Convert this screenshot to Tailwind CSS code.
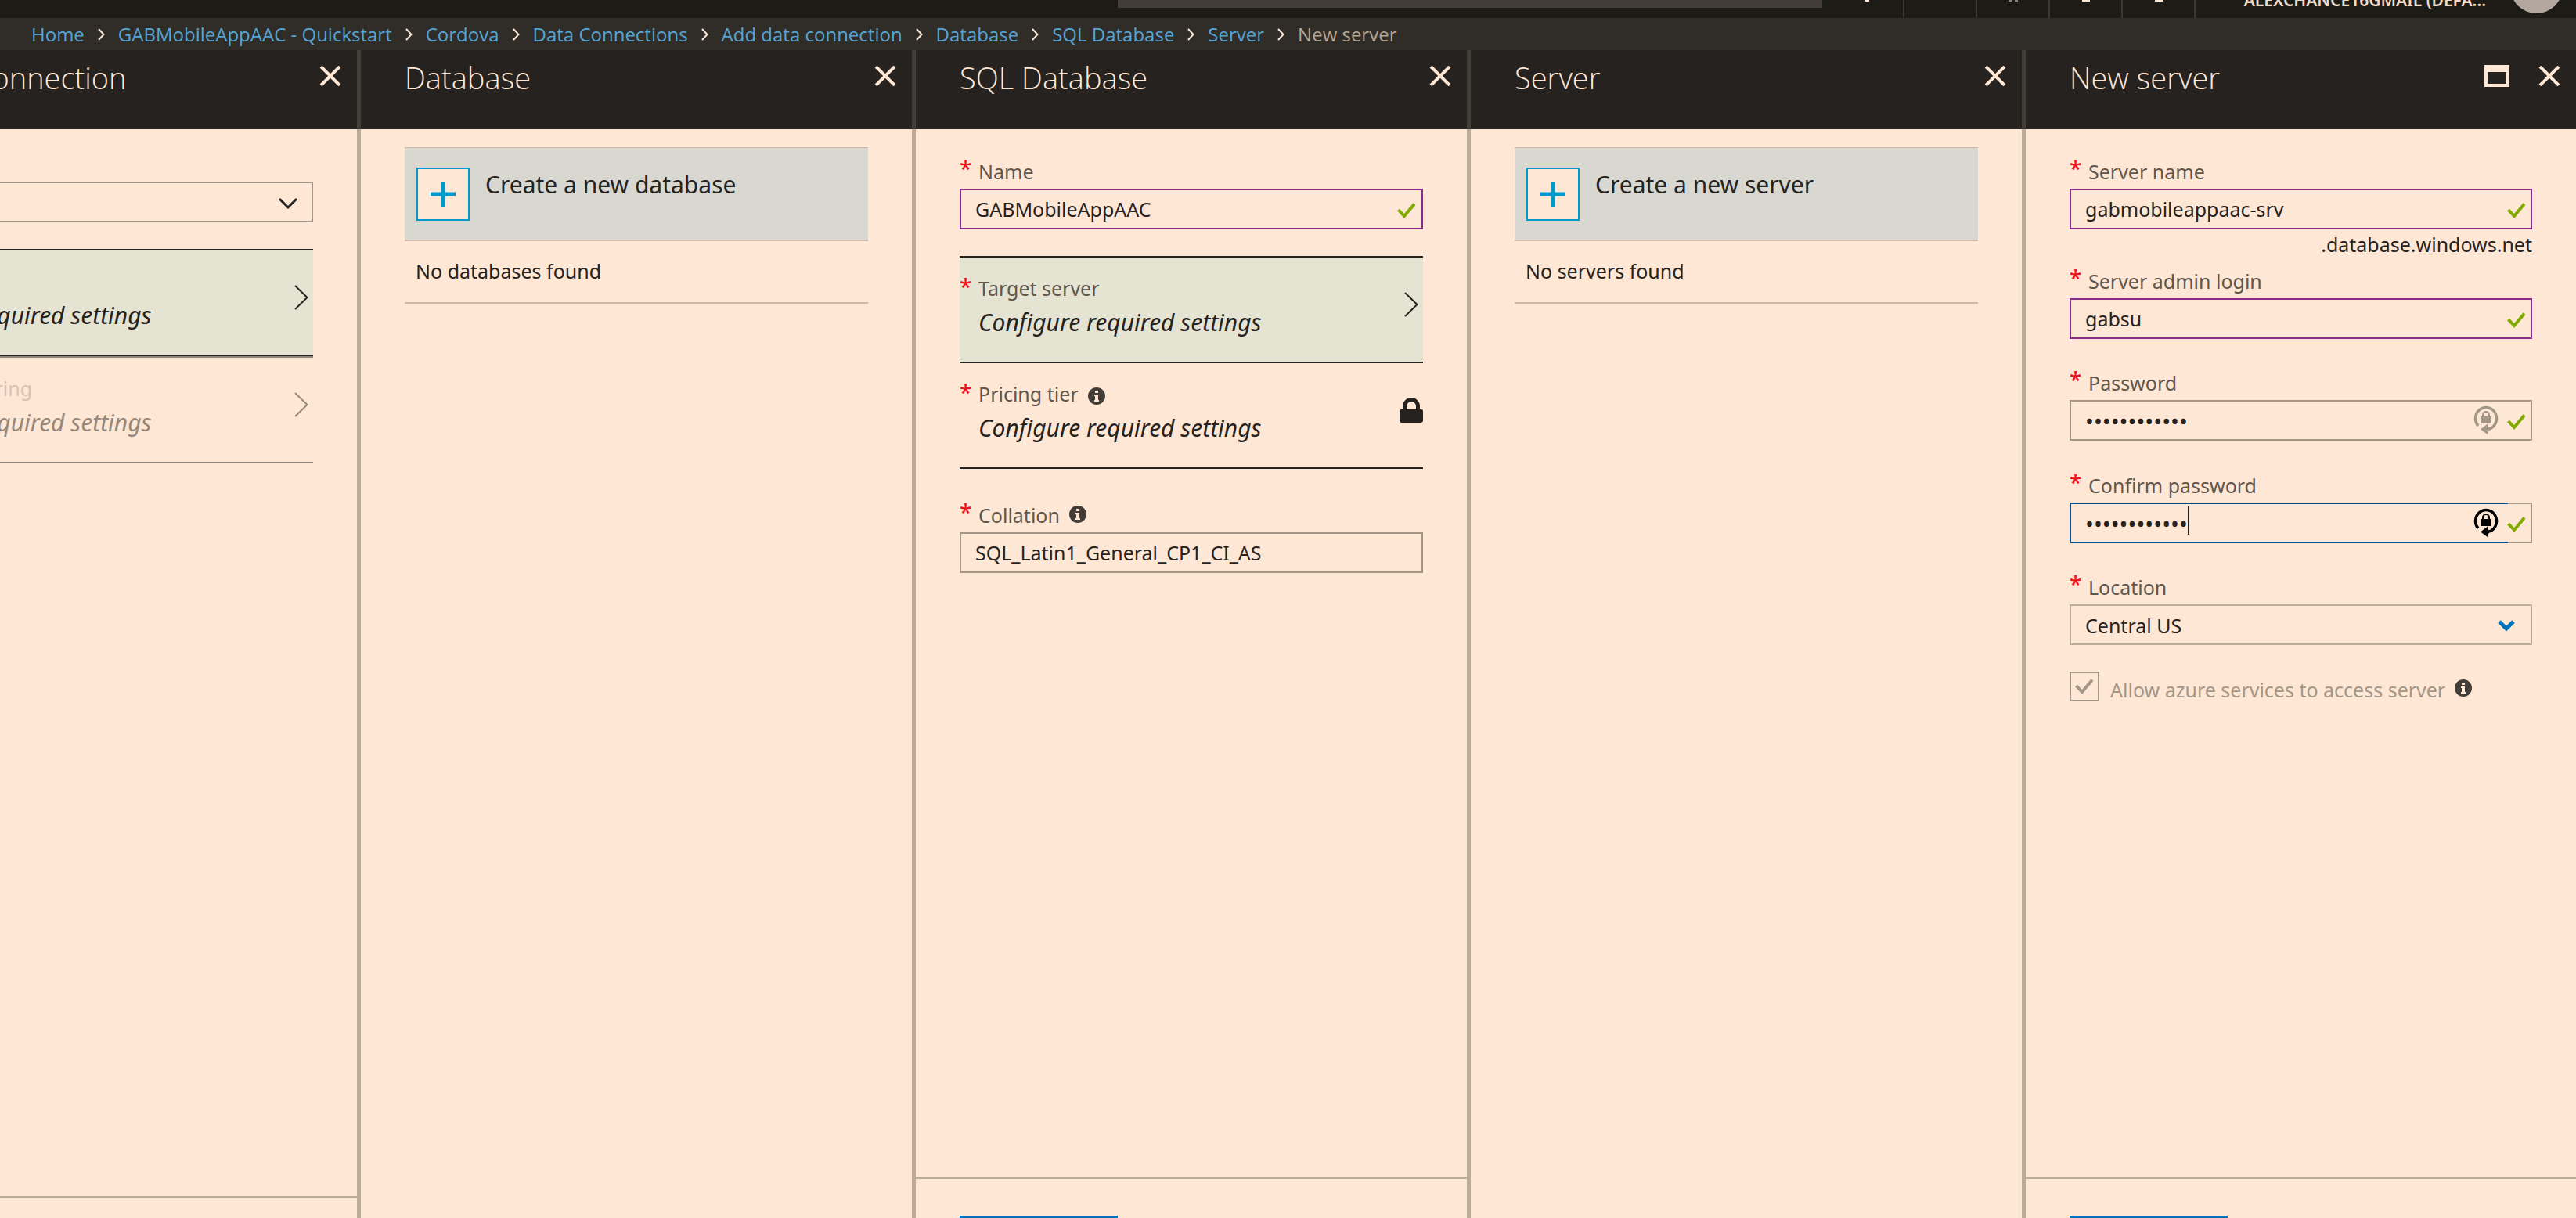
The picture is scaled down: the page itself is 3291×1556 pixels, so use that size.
<!DOCTYPE html>
<html lang="en">
<head>
<meta charset="utf-8">
<title>New server - Microsoft Azure</title>
<script src="https://cdn.jsdelivr.net/npm/@tailwindcss/browser@4"></script>
</head>
<body class="flex h-screen flex-col overflow-hidden bg-[#ffe7d5] font-['Noto_Sans','Open_Sans',sans-serif] text-[25px] text-[#262220]">

<svg class="hidden" aria-hidden="true">
  <symbol id="crumb" viewBox="0 0 9 16"><path d="M1 1l6.500 7L1 15" fill="none" stroke="currentColor" stroke-width="2"/></symbol>
  <symbol id="close" viewBox="0 0 28 26"><path d="M2 1l24 24M26 1L2 25" fill="none" stroke="currentColor" stroke-width="4"/></symbol>
  <symbol id="maximize" viewBox="0 0 32 28"><path d="M0 0h32v28H0zM4 9v15h24V9z" fill="currentColor" fill-rule="evenodd"/></symbol>
  <symbol id="chevron" viewBox="0 0 18 32"><path d="M1 1l15.500 15L1 31" fill="none" stroke="currentColor" stroke-width="2"/></symbol>
  <symbol id="tick" viewBox="0 0 24 20"><path d="M1.500 9l7.500 8L22 1.500" fill="none" stroke="currentColor" stroke-width="4"/></symbol>
  <symbol id="info" viewBox="0 0 22 22"><circle cx="11" cy="11" r="11" fill="currentColor"/><path d="M9 4h4v3H9zM8 9h5v7h1v2H8v-2h1v-5H8z" fill="#ffe7d5"/></symbol>
  <symbol id="lock" viewBox="0 0 30 32"><path d="M2 15h2v-4a11 11 0 0 1 22 0v4h2q2 0 2 2v12q0 3-3 3H3q-3 0-3-3V17q0-2 2-2zm7 0h12v-4a6 6 0 0 0-12 0z" fill="currentColor" fill-rule="evenodd"/></symbol>
  <symbol id="reset" viewBox="0 0 32 38"><path d="M6 26A13.500 14 0 1 1 18 30.500" fill="none" stroke="currentColor" stroke-width="3.500"/><path d="M9 30.500l9-7v4.500l2 2.500-2 6.500z" fill="currentColor"/><path d="M10 14h1v-2a5 5 0 0 1 10 0v2h1v9H10zm3 0h6v-2a3 3 0 0 0-6 0z" fill="currentColor" fill-rule="evenodd"/></symbol>
  <symbol id="plus" viewBox="0 0 32 32"><path d="M16 0v32M0 16h32" fill="none" stroke="currentColor" stroke-width="5"/></symbol>
</svg>

<header class="flex h-[23px] shrink-0 items-end justify-end overflow-hidden bg-[#1c1b16]">
  <div class="mb-[13px] h-9 w-[900px] shrink-0 bg-[#423e37]"></div>
  <div class="ml-3 flex h-[92px] shrink-0 text-[#ffe7d5]">
    <span class="flex w-[93px] justify-center border-r-2 border-[#3a3833] pt-[69px]"><i class="h-[2px] w-[5px] bg-current"></i></span>
    <span class="w-[93px] border-r-2 border-[#3a3833]"></span>
    <span class="flex w-[93px] justify-center gap-1 border-r-2 border-[#3a3833] pt-[69px] text-[#8c8278]"><i class="h-[2px] w-1 bg-current"></i><i class="h-[2px] w-1 bg-current"></i></span>
    <span class="flex w-[93px] justify-center border-r-2 border-[#3a3833] pt-[69px]"><i class="h-[2px] w-[10px] bg-current"></i></span>
    <span class="flex w-[93px] justify-center border-r-2 border-[#3a3833] pt-[69px]"><i class="h-[2px] w-[10px] bg-current"></i></span>
  </div>
  <span class="mb-[11px] w-[371px] shrink-0 text-right text-[21px] leading-6 font-semibold text-[#f0dac8]">ALEXCHANCE16GMAIL (DEFA...</span>
  <span class="mr-[17px] mb-[6px] ml-[31px] size-[67px] shrink-0 rounded-full bg-[#b3a89f]"></span>
</header>

<nav aria-label="Breadcrumb" class="flex h-[41px] shrink-0 items-center bg-[#302d28] pl-10 font-['Open_Sans',sans-serif] text-2xl whitespace-nowrap text-[#57a4d4]">
  <a href="#">Home</a><svg class="mx-[17px] h-4 w-[9px] text-[#ffe7d5]"><use href="#crumb"/></svg>
  <a href="#">GABMobileAppAAC - Quickstart</a><svg class="mx-[17px] h-4 w-[9px] text-[#ffe7d5]"><use href="#crumb"/></svg>
  <a href="#">Cordova</a><svg class="mx-[17px] h-4 w-[9px] text-[#ffe7d5]"><use href="#crumb"/></svg>
  <a href="#">Data Connections</a><svg class="mx-[17px] h-4 w-[9px] text-[#ffe7d5]"><use href="#crumb"/></svg>
  <a href="#">Add data connection</a><svg class="mx-[17px] h-4 w-[9px] text-[#ffe7d5]"><use href="#crumb"/></svg>
  <a href="#">Database</a><svg class="mx-[17px] h-4 w-[9px] text-[#ffe7d5]"><use href="#crumb"/></svg>
  <a href="#">SQL Database</a><svg class="mx-[17px] h-4 w-[9px] text-[#ffe7d5]"><use href="#crumb"/></svg>
  <a href="#">Server</a><svg class="mx-[17px] h-4 w-[9px] text-[#ffe7d5]"><use href="#crumb"/></svg>
  <span class="text-[#b5a595]">New server</span>
</nav>

<main class="grid min-h-0 flex-1 grid-cols-[461fr_709fr_709fr_709fr_703fr]">

  <!-- Add data connection -->
  <section class="flex min-w-0 justify-end overflow-hidden">
    <div class="flex w-[709px] shrink-0 flex-col">
      <div class="flex h-[101px] shrink-0 items-start justify-between border-r-[5px] border-[#423f37] bg-[#262220] pr-5 pl-14 text-[#ffe7d5]">
        <h2 class="font-['Open_Sans',sans-serif] text-[38px] leading-[70px] font-light">Add data connection</h2>
        <button aria-label="Close" class="mt-5"><svg class="h-[26px] w-7"><use href="#close"/></svg></button>
      </div>
      <div class="flex min-h-0 flex-1 flex-col border-r-[5px] border-[#bbab99]">
        <div class="flex-1 px-14 pt-[67px]">
          <div class="relative">
            <select aria-label="Type" class="h-[52px] w-full appearance-none border-2 border-[#a49787] pl-[18px]"><option>SQL Database</option></select>
            <svg viewBox="0 0 24 16" class="pointer-events-none absolute top-5 right-5 h-4 w-6"><path d="M1 2l11 11L23 2" fill="none" stroke="currentColor" stroke-width="3"/></svg>
          </div>
          <button class="mt-[34px] flex h-[137px] w-full items-start justify-between border-y-2 border-[#262220] bg-[#e5e4d3] text-left">
            <span class="pt-[23px] pl-6"><span class="block leading-8 text-[#5f564c]">SQL Database</span><span class="block text-[30px] leading-14 italic">Configure required settings</span></span>
            <svg class="mt-11 mr-[6px] h-8 w-[18px]"><use href="#chevron"/></svg>
          </button>
          <button disabled class="flex h-[137px] w-full items-start justify-between border-y-2 border-[#8f857a] text-left text-[#96897c]">
            <span class="pt-[23px] pl-6"><span class="block leading-8 text-[#d6c3b2]">Connection string</span><span class="block text-[30px] leading-14 italic">Configure required settings</span></span>
            <svg class="mt-11 mr-[6px] h-8 w-[18px]"><use href="#chevron"/></svg>
          </button>
        </div>
        <div class="h-7 border-t-2 border-[#bbab99]"></div>
      </div>
    </div>
  </section>

  <!-- Database -->
  <section class="flex min-w-0 flex-col">
    <div class="flex h-[101px] shrink-0 items-start justify-between border-r-[5px] border-[#423f37] bg-[#262220] pr-5 pl-14 text-[#ffe7d5]">
      <h2 class="font-['Open_Sans',sans-serif] text-[38px] leading-[70px] font-light">Database</h2>
      <button aria-label="Close" class="mt-5"><svg class="h-[26px] w-7"><use href="#close"/></svg></button>
    </div>
    <div class="flex-1 border-r-[5px] border-[#bbab99] px-14 pt-[23px]">
      <button class="flex h-[120px] w-full items-start border-t border-b-2 border-[#cbb9a9] bg-[#d8d8d1] px-[15px] pt-[25px] text-left">
        <span class="grid size-[68px] place-items-center border-2 border-[#0099cc] bg-[#ffe7d5] text-[#0099cc]"><svg class="size-8"><use href="#plus"/></svg></span>
        <span class="pl-5 text-[30px] leading-11">Create a new database</span>
      </button>
      <p class="flex h-20 items-center border-b-2 border-[#cbb9a9] pl-[14px]">No databases found</p>
    </div>
  </section>

  <!-- SQL Database -->
  <section class="flex min-w-0 flex-col">
    <div class="flex h-[101px] shrink-0 items-start justify-between border-r-[5px] border-[#423f37] bg-[#262220] pr-5 pl-14 text-[#ffe7d5]">
      <h2 class="font-['Open_Sans',sans-serif] text-[38px] leading-[70px] font-light">SQL Database</h2>
      <button aria-label="Close" class="mt-5"><svg class="h-[26px] w-7"><use href="#close"/></svg></button>
    </div>
    <div class="flex min-h-0 flex-1 flex-col border-r-[5px] border-[#bbab99]">
      <form class="flex-1 px-14 pt-9">
        <label for="db-name" class="flex h-10 items-start leading-9 text-[#5f564c]"><span class="w-6 text-[28px] leading-7 font-medium text-[#f0101c]">*</span>Name</label>
        <div class="relative">
          <input id="db-name" value="GABMobileAppAAC" class="h-[52px] w-full border-2 border-[#8b2a8d] pl-[18px]">
          <svg class="absolute top-[18px] right-[9px] h-5 w-6 text-[#80aa00]"><use href="#tick"/></svg>
        </div>
        <button type="button" class="mt-[34px] flex h-[137px] w-full items-start justify-between border-y-2 border-[#262220] bg-[#e5e4d3] text-left">
          <span class="pt-[23px]">
            <span class="flex items-start leading-8 text-[#5f564c]"><span class="w-6 text-[28px] leading-7 font-medium text-[#f0101c]">*</span>Target server</span>
            <span class="block pl-6 text-[30px] leading-14 italic">Configure required settings</span>
          </span>
          <svg class="mt-11 mr-[6px] h-8 w-[18px]"><use href="#chevron"/></svg>
        </button>
        <button type="button" class="flex h-[135px] w-full items-start justify-between border-b-2 border-[#262220] text-left">
          <span class="pt-[23px]">
            <span class="flex items-start leading-8 text-[#5f564c]"><span class="w-6 text-[28px] leading-7 font-medium text-[#f0101c]">*</span>Pricing tier<svg class="mt-2 ml-3 size-[22px] text-[#423e37]"><use href="#info"/></svg></span>
            <span class="block pl-6 text-[30px] leading-14 italic">Configure required settings</span>
          </span>
          <svg class="mt-11 h-8 w-[30px]"><use href="#lock"/></svg>
        </button>
        <label for="collation" class="mt-[41px] flex h-10 items-start leading-9 text-[#5f564c]"><span class="w-6 text-[28px] leading-7 font-medium text-[#f0101c]">*</span>Collation<svg class="mt-[6px] ml-3 size-[22px] text-[#423e37]"><use href="#info"/></svg></label>
        <input id="collation" value="SQL_Latin1_General_CP1_CI_AS" class="h-[52px] w-full border-2 border-[#a49787] pl-[18px]">
      </form>
      <div class="h-[52px] overflow-hidden border-t-2 border-[#bbab99] px-14 pt-[47px]"><button aria-label="Select" class="block h-14 w-[202px] bg-[#0072bb]"></button></div>
    </div>
  </section>

  <!-- Server -->
  <section class="flex min-w-0 flex-col">
    <div class="flex h-[101px] shrink-0 items-start justify-between border-r-[5px] border-[#423f37] bg-[#262220] pr-5 pl-14 text-[#ffe7d5]">
      <h2 class="font-['Open_Sans',sans-serif] text-[38px] leading-[70px] font-light">Server</h2>
      <button aria-label="Close" class="mt-5"><svg class="h-[26px] w-7"><use href="#close"/></svg></button>
    </div>
    <div class="flex-1 border-r-[5px] border-[#bbab99] px-14 pt-[23px]">
      <button class="flex h-[120px] w-full items-start border-t border-b-2 border-[#cbb9a9] bg-[#d8d8d1] px-[15px] pt-[25px] text-left">
        <span class="grid size-[68px] place-items-center border-2 border-[#0099cc] bg-[#ffe7d5] text-[#0099cc]"><svg class="size-8"><use href="#plus"/></svg></span>
        <span class="pl-5 text-[30px] leading-11">Create a new server</span>
      </button>
      <p class="flex h-20 items-center border-b-2 border-[#cbb9a9] pl-[14px]">No servers found</p>
    </div>
  </section>

  <!-- New server -->
  <section class="flex min-w-0 flex-col">
    <div class="flex h-[101px] shrink-0 items-start bg-[#262220] pr-5 pl-14 text-[#ffe7d5]">
      <h2 class="flex-1 font-['Open_Sans',sans-serif] text-[38px] leading-[70px] font-light">New server</h2>
      <button aria-label="Maximize" class="mt-[19px] mr-[37px]"><svg class="h-7 w-8"><use href="#maximize"/></svg></button>
      <button aria-label="Close" class="mt-5"><svg class="h-[26px] w-7"><use href="#close"/></svg></button>
    </div>
    <form class="flex-1 px-14 pt-9">
      <label for="srv-name" class="flex h-10 items-start leading-9 text-[#5f564c]"><span class="w-6 text-[28px] leading-7 font-medium text-[#f0101c]">*</span>Server name</label>
      <div class="relative">
        <input id="srv-name" value="gabmobileappaac-srv" class="h-[52px] w-full border-2 border-[#8b2a8d] pl-[18px]">
        <svg class="absolute top-[18px] right-2 h-5 w-6 text-[#80aa00]"><use href="#tick"/></svg>
      </div>
      <p class="h-12 text-right leading-[38px]">.database.windows.net</p>

      <label for="login" class="flex h-10 items-start leading-9 text-[#5f564c]"><span class="w-6 text-[28px] leading-7 font-medium text-[#f0101c]">*</span>Server admin login</label>
      <div class="relative">
        <input id="login" value="gabsu" class="h-[52px] w-full border-2 border-[#8b2a8d] pl-[18px]">
        <svg class="absolute top-[18px] right-2 h-5 w-6 text-[#80aa00]"><use href="#tick"/></svg>
      </div>

      <label for="pw" class="mt-[38px] flex h-10 items-start leading-9 text-[#5f564c]"><span class="w-6 text-[28px] leading-7 font-medium text-[#f0101c]">*</span>Password</label>
      <div class="relative">
        <input id="pw" type="password" value="abcdefghijkl" class="h-[52px] w-full border-2 border-[#a49787] pl-[18px] text-[29px]">
        <svg class="absolute top-[7px] right-[43px] h-[38px] w-8 text-[#a49787]"><use href="#reset"/></svg>
        <svg class="absolute top-[18px] right-2 h-5 w-6 text-[#80aa00]"><use href="#tick"/></svg>
      </div>

      <label for="pw2" class="mt-[39px] flex h-10 items-start leading-9 text-[#5f564c]"><span class="w-6 text-[28px] leading-7 font-medium text-[#f0101c]">*</span>Confirm password</label>
      <div class="relative flex">
        <input id="pw2" type="password" value="abcdefghijkl" class="h-[52px] min-w-0 flex-1 border-y-2 border-l-2 border-[#004f91] pl-[18px] text-[29px]">
        <span class="w-[31px] border-y-2 border-r-2 border-[#a49787]"></span>
        <span class="absolute top-[5px] left-[151px] h-9 w-[2px] bg-[#262220]"></span>
        <svg class="absolute top-[7px] right-[43px] h-[38px] w-8 text-black"><use href="#reset"/></svg>
        <svg class="absolute top-[18px] right-2 h-5 w-6 text-[#80aa00]"><use href="#tick"/></svg>
      </div>

      <label for="location" class="mt-[38px] flex h-10 items-start leading-9 text-[#5f564c]"><span class="w-6 text-[28px] leading-7 font-medium text-[#f0101c]">*</span>Location</label>
      <div class="relative">
        <select id="location" class="h-[52px] w-full appearance-none border-2 border-[#bbab99] pt-1 pl-[18px]"><option>Central US</option></select>
        <svg viewBox="0 0 22 16" class="pointer-events-none absolute top-5 right-[22px] h-4 w-[22px] text-[#0072bb]"><path d="M2 2l9 9 9-9" fill="none" stroke="currentColor" stroke-width="5"/></svg>
      </div>

      <div class="mt-[34px] flex items-start text-[#a49787]">
        <span class="relative size-[38px] shrink-0">
          <input id="allow" type="checkbox" checked disabled class="block size-[38px] appearance-none border-2 border-[#a49787]">
          <svg class="pointer-events-none absolute top-[9px] left-[7px] h-5 w-6"><use href="#tick"/></svg>
        </span>
        <label for="allow" class="pl-[14px] leading-[46px]">Allow azure services to access server</label>
        <svg class="mt-[10px] ml-3 size-[22px] text-[#423e37]"><use href="#info"/></svg>
      </div>
    </form>
    <div class="h-[52px] overflow-hidden border-t-2 border-[#bbab99] px-14 pt-[47px]"><button aria-label="OK" class="block h-14 w-[202px] bg-[#0072bb]"></button></div>
  </section>
</main>
</body>
</html>
